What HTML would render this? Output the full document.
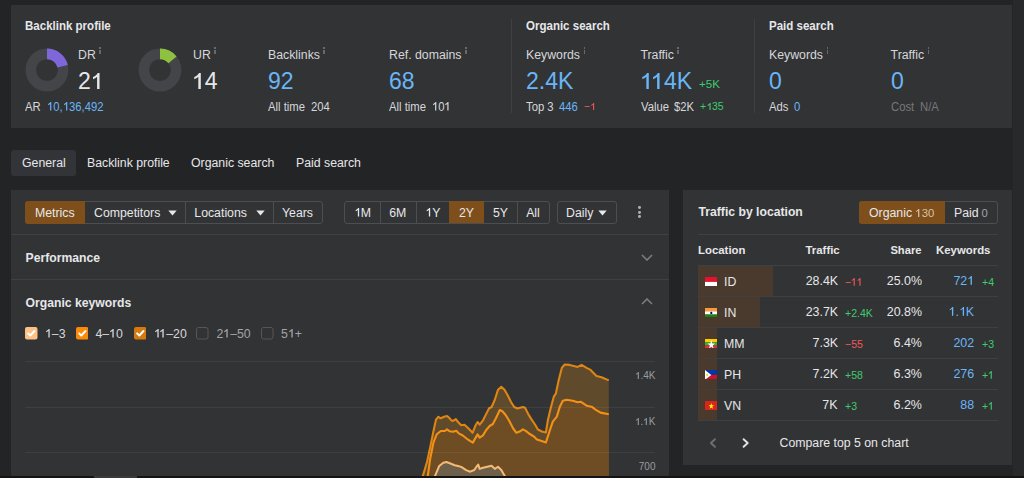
<!DOCTYPE html>
<html><head><meta charset="utf-8"><style>
html,body{margin:0;padding:0;}
body{width:1024px;height:478px;overflow:hidden;background:#232426;position:relative;font-family:"Liberation Sans", sans-serif;}
.t{position:absolute;white-space:nowrap;}
.r{position:absolute;}
.one{display:inline-block;width:0.5562em;height:0.6985em;vertical-align:baseline;fill:currentColor;}
.one.k{margin-right:-0.0742em;}
</style></head><body>
<div class="r" style="left:11px;top:5px;width:1001px;height:123px;background:#323335;"></div>
<div class="t" style="left:25px;transform:scaleX(0.945);transform-origin:0 0;top:19.57px;font-size:12.2px;line-height:12.2px;font-weight:700;color:#e6e7e9;">Backlink profile</div>
<div class="t" style="left:526px;transform:scaleX(0.945);transform-origin:0 0;top:19.57px;font-size:12.2px;line-height:12.2px;font-weight:700;color:#e6e7e9;">Organic search</div>
<div class="t" style="left:769px;transform:scaleX(0.945);transform-origin:0 0;top:19.57px;font-size:12.2px;line-height:12.2px;font-weight:700;color:#e6e7e9;">Paid search</div>
<div class="r" style="left:511px;top:19px;width:1px;height:94px;background:#3f4042;"></div>
<div class="r" style="left:754px;top:19px;width:1px;height:94px;background:#3f4042;"></div>
<svg class="r" style="left:21.5px;top:45px" width="50" height="50" viewBox="0 0 50 50"><circle cx="25" cy="25" r="16.1" fill="none" stroke="#444548" stroke-width="10.6"/><circle cx="25" cy="25" r="16.1" fill="none" stroke="#7f67da" stroke-width="10.6" stroke-dasharray="21.24 101.16" transform="rotate(-90 25 25)"/></svg>
<svg class="r" style="left:135.4px;top:44.8px" width="50" height="50" viewBox="0 0 50 50"><circle cx="25" cy="25" r="16.1" fill="none" stroke="#444548" stroke-width="10.6"/><circle cx="25" cy="25" r="16.1" fill="none" stroke="#8dc13f" stroke-width="10.6" stroke-dasharray="14.16 101.16" transform="rotate(-90 25 25)"/></svg>
<div class="t" style="left:78px;top:49.49px;font-size:12.3px;line-height:12.3px;font-weight:400;color:#d6d7da;">DR</div>
<div class="r" style="left:99.26581250000001px;top:47px;width:1.6px;height:1.6px;background:#68696c;"></div>
<div class="r" style="left:99.26581250000001px;top:49.5px;width:1.6px;height:4.7px;background:#68696c;"></div>
<div class="t" style="left:193px;top:49.49px;font-size:12.3px;line-height:12.3px;font-weight:400;color:#d6d7da;">UR</div>
<div class="r" style="left:214.2658125px;top:47px;width:1.6px;height:1.6px;background:#68696c;"></div>
<div class="r" style="left:214.2658125px;top:49.5px;width:1.6px;height:4.7px;background:#68696c;"></div>
<div class="t" style="left:268px;top:49.49px;font-size:12.3px;line-height:12.3px;font-weight:400;color:#d6d7da;">Backlinks</div>
<div class="r" style="left:323.452125px;top:47px;width:1.6px;height:1.6px;background:#68696c;"></div>
<div class="r" style="left:323.452125px;top:49.5px;width:1.6px;height:4.7px;background:#68696c;"></div>
<div class="t" style="left:389px;top:49.49px;font-size:12.3px;line-height:12.3px;font-weight:400;color:#d6d7da;">Ref. domains</div>
<div class="r" style="left:464.97390625px;top:47px;width:1.6px;height:1.6px;background:#68696c;"></div>
<div class="r" style="left:464.97390625px;top:49.5px;width:1.6px;height:4.7px;background:#68696c;"></div>
<div class="t" style="left:526px;top:49.49px;font-size:12.3px;line-height:12.3px;font-weight:400;color:#d6d7da;">Keywords</div>
<div class="r" style="left:583.50853125px;top:47px;width:1.6px;height:1.6px;background:#68696c;"></div>
<div class="r" style="left:583.50853125px;top:49.5px;width:1.6px;height:4.7px;background:#68696c;"></div>
<div class="t" style="left:640.4px;top:49.49px;font-size:12.3px;line-height:12.3px;font-weight:400;color:#d6d7da;">Traffic</div>
<div class="r" style="left:677.39059375px;top:47px;width:1.6px;height:1.6px;background:#68696c;"></div>
<div class="r" style="left:677.39059375px;top:49.5px;width:1.6px;height:4.7px;background:#68696c;"></div>
<div class="t" style="left:769px;top:49.49px;font-size:12.3px;line-height:12.3px;font-weight:400;color:#d6d7da;">Keywords</div>
<div class="r" style="left:826.50853125px;top:47px;width:1.6px;height:1.6px;background:#68696c;"></div>
<div class="r" style="left:826.50853125px;top:49.5px;width:1.6px;height:4.7px;background:#68696c;"></div>
<div class="t" style="left:890.6px;top:49.49px;font-size:12.3px;line-height:12.3px;font-weight:400;color:#d6d7da;">Traffic</div>
<div class="r" style="left:927.59059375px;top:47px;width:1.6px;height:1.6px;background:#68696c;"></div>
<div class="r" style="left:927.59059375px;top:49.5px;width:1.6px;height:4.7px;background:#68696c;"></div>
<div class="t" style="left:78px;transform:scaleX(0.98);transform-origin:0 0;top:69.91px;font-size:23.5px;line-height:23.5px;font-weight:400;color:#e6e7e9;">2<svg class="one" viewBox="0 0 1139 1466" preserveAspectRatio="none"><path d="M783 1466L563 1466L563 339C520 380 463 421 392 463C322 504 259 536 203 557L203 363C303 316 391 259 467 192C543 125 597 61 628 0L783 0Z"/></svg></div>
<div class="t" style="left:192.3px;transform:scaleX(0.98);transform-origin:0 0;top:69.91px;font-size:23.5px;line-height:23.5px;font-weight:400;color:#e6e7e9;"><svg class="one" viewBox="0 0 1139 1466" preserveAspectRatio="none"><path d="M783 1466L563 1466L563 339C520 380 463 421 392 463C322 504 259 536 203 557L203 363C303 316 391 259 467 192C543 125 597 61 628 0L783 0Z"/></svg>4</div>
<div class="t" style="left:268px;transform:scaleX(0.98);transform-origin:0 0;top:69.91px;font-size:23.5px;line-height:23.5px;font-weight:400;color:#69b5f5;">92</div>
<div class="t" style="left:389px;transform:scaleX(0.98);transform-origin:0 0;top:69.91px;font-size:23.5px;line-height:23.5px;font-weight:400;color:#69b5f5;">68</div>
<div class="t" style="left:526px;transform:scaleX(0.98);transform-origin:0 0;top:69.91px;font-size:23.5px;line-height:23.5px;font-weight:400;color:#69b5f5;">2.4K</div>
<div class="t" style="left:639.6px;transform:scaleX(0.98);transform-origin:0 0;top:69.91px;font-size:23.5px;line-height:23.5px;font-weight:400;color:#69b5f5;"><svg class="one k" viewBox="0 0 1139 1466" preserveAspectRatio="none"><path d="M783 1466L563 1466L563 339C520 380 463 421 392 463C322 504 259 536 203 557L203 363C303 316 391 259 467 192C543 125 597 61 628 0L783 0Z"/></svg><svg class="one" viewBox="0 0 1139 1466" preserveAspectRatio="none"><path d="M783 1466L563 1466L563 339C520 380 463 421 392 463C322 504 259 536 203 557L203 363C303 316 391 259 467 192C543 125 597 61 628 0L783 0Z"/></svg>4K</div>
<div class="t" style="left:769px;transform:scaleX(0.98);transform-origin:0 0;top:69.91px;font-size:23.5px;line-height:23.5px;font-weight:400;color:#69b5f5;">0</div>
<div class="t" style="left:891px;transform:scaleX(0.98);transform-origin:0 0;top:69.91px;font-size:23.5px;line-height:23.5px;font-weight:400;color:#69b5f5;">0</div>
<div class="t" style="left:699px;top:77.98px;font-size:11.6px;line-height:11.6px;font-weight:400;color:#3fcb6f;">+5K</div>
<div class="t" style="left:25px;transform:scaleX(0.94);transform-origin:0 0;top:100.64px;font-size:12px;line-height:12px;font-weight:400;color:#d6d7da;">AR</div>
<div class="t" style="left:46.5px;transform:scaleX(0.94);transform-origin:0 0;top:100.64px;font-size:12px;line-height:12px;font-weight:400;color:#69b5f5;"><svg class="one" viewBox="0 0 1139 1466" preserveAspectRatio="none"><path d="M783 1466L563 1466L563 339C520 380 463 421 392 463C322 504 259 536 203 557L203 363C303 316 391 259 467 192C543 125 597 61 628 0L783 0Z"/></svg>0,<svg class="one" viewBox="0 0 1139 1466" preserveAspectRatio="none"><path d="M783 1466L563 1466L563 339C520 380 463 421 392 463C322 504 259 536 203 557L203 363C303 316 391 259 467 192C543 125 597 61 628 0L783 0Z"/></svg>36,492</div>
<div class="t" style="left:268px;transform:scaleX(0.94);transform-origin:0 0;top:100.64px;font-size:12px;line-height:12px;font-weight:400;color:#d6d7da;">All time</div>
<div class="t" style="left:311px;transform:scaleX(0.94);transform-origin:0 0;top:100.64px;font-size:12px;line-height:12px;font-weight:400;color:#d6d7da;">204</div>
<div class="t" style="left:389px;transform:scaleX(0.94);transform-origin:0 0;top:100.64px;font-size:12px;line-height:12px;font-weight:400;color:#d6d7da;">All time</div>
<div class="t" style="left:432px;transform:scaleX(0.94);transform-origin:0 0;top:100.64px;font-size:12px;line-height:12px;font-weight:400;color:#d6d7da;"><svg class="one" viewBox="0 0 1139 1466" preserveAspectRatio="none"><path d="M783 1466L563 1466L563 339C520 380 463 421 392 463C322 504 259 536 203 557L203 363C303 316 391 259 467 192C543 125 597 61 628 0L783 0Z"/></svg>0<svg class="one" viewBox="0 0 1139 1466" preserveAspectRatio="none"><path d="M783 1466L563 1466L563 339C520 380 463 421 392 463C322 504 259 536 203 557L203 363C303 316 391 259 467 192C543 125 597 61 628 0L783 0Z"/></svg></div>
<div class="t" style="left:526px;transform:scaleX(0.94);transform-origin:0 0;top:100.64px;font-size:12px;line-height:12px;font-weight:400;color:#d6d7da;">Top 3</div>
<div class="t" style="left:559px;transform:scaleX(0.94);transform-origin:0 0;top:100.64px;font-size:12px;line-height:12px;font-weight:400;color:#69b5f5;">446</div>
<div class="t" style="left:584.3px;transform:scaleX(0.9);transform-origin:0 0;top:101.32px;font-size:11.2px;line-height:11.2px;font-weight:400;color:#f0585a;">&minus;<svg class="one" viewBox="0 0 1139 1466" preserveAspectRatio="none"><path d="M783 1466L563 1466L563 339C520 380 463 421 392 463C322 504 259 536 203 557L203 363C303 316 391 259 467 192C543 125 597 61 628 0L783 0Z"/></svg></div>
<div class="t" style="left:641px;transform:scaleX(0.94);transform-origin:0 0;top:100.64px;font-size:12px;line-height:12px;font-weight:400;color:#d6d7da;">Value</div>
<div class="t" style="left:673.8px;transform:scaleX(0.94);transform-origin:0 0;top:100.64px;font-size:12px;line-height:12px;font-weight:400;color:#d6d7da;">$2K</div>
<div class="t" style="left:699.5px;transform:scaleX(0.94);transform-origin:0 0;top:101.32px;font-size:11.2px;line-height:11.2px;font-weight:400;color:#3fcb6f;">+<svg class="one" viewBox="0 0 1139 1466" preserveAspectRatio="none"><path d="M783 1466L563 1466L563 339C520 380 463 421 392 463C322 504 259 536 203 557L203 363C303 316 391 259 467 192C543 125 597 61 628 0L783 0Z"/></svg>35</div>
<div class="t" style="left:769px;transform:scaleX(0.94);transform-origin:0 0;top:100.64px;font-size:12px;line-height:12px;font-weight:400;color:#d6d7da;">Ads</div>
<div class="t" style="left:794px;transform:scaleX(0.94);transform-origin:0 0;top:100.64px;font-size:12px;line-height:12px;font-weight:400;color:#69b5f5;">0</div>
<div class="t" style="left:891px;transform:scaleX(0.94);transform-origin:0 0;top:100.64px;font-size:12px;line-height:12px;font-weight:400;color:#77787b;">Cost</div>
<div class="t" style="left:919.5px;transform:scaleX(0.94);transform-origin:0 0;top:100.64px;font-size:12px;line-height:12px;font-weight:400;color:#77787b;">N/A</div>
<div class="r" style="left:11px;top:149.7px;width:65px;height:26.2px;background:#333437;border-radius:3px;"></div>
<div class="t" style="left:22px;top:156.89px;font-size:12.3px;line-height:12.3px;font-weight:400;color:#e6e7e9;">General</div>
<div class="t" style="left:87px;top:156.89px;font-size:12.3px;line-height:12.3px;font-weight:400;color:#e6e7e9;">Backlink profile</div>
<div class="t" style="left:191px;top:156.89px;font-size:12.3px;line-height:12.3px;font-weight:400;color:#e6e7e9;">Organic search</div>
<div class="t" style="left:296px;top:156.89px;font-size:12.3px;line-height:12.3px;font-weight:400;color:#e6e7e9;">Paid search</div>
<div class="r" style="left:11px;top:190px;width:658px;height:300px;background:#323335;"></div>
<div class="r" style="left:25px;top:200.5px;width:298px;height:23px;background:transparent;border:1px solid #4d4e51;border-radius:3px;box-sizing:border-box;"></div>
<div class="r" style="left:25px;top:200.5px;width:60px;height:23px;background:#7e4f1a;border-radius:3px 0 0 3px;"></div>
<div class="r" style="left:184.8px;top:201px;width:1px;height:22px;background:#4d4e51;"></div>
<div class="r" style="left:273px;top:201px;width:1px;height:22px;background:#4d4e51;"></div>
<div class="t" style="left:35px;top:206.89px;font-size:12.3px;line-height:12.3px;font-weight:400;color:#e6e7e9;">Metrics</div>
<div class="t" style="left:94px;top:206.89px;font-size:12.3px;line-height:12.3px;font-weight:400;color:#e6e7e9;">Competitors</div>
<div class="t" style="left:194.3px;top:206.89px;font-size:12.3px;line-height:12.3px;font-weight:400;color:#e6e7e9;">Locations</div>
<div class="t" style="left:282px;top:206.89px;font-size:12.3px;line-height:12.3px;font-weight:400;color:#e6e7e9;">Years</div>
<svg class="r" style="left:168.3px;top:209.8px" width="9" height="6" viewBox="0 0 9 6"><path d="M0.3 0.5 L8.7 0.5 L4.5 5.6 Z" fill="#e6e7e9"/></svg>
<svg class="r" style="left:255.5px;top:209.8px" width="9" height="6" viewBox="0 0 9 6"><path d="M0.3 0.5 L8.7 0.5 L4.5 5.6 Z" fill="#e6e7e9"/></svg>
<div class="r" style="left:344px;top:200.5px;width:206px;height:23px;background:transparent;border:1px solid #4d4e51;border-radius:3px;box-sizing:border-box;"></div>
<div class="r" style="left:449px;top:201px;width:35px;height:22px;background:#7e4f1a;"></div>
<div class="r" style="left:380px;top:201px;width:1px;height:22px;background:#4d4e51;"></div>
<div class="r" style="left:416px;top:201px;width:1px;height:22px;background:#4d4e51;"></div>
<div class="r" style="left:516.5px;top:201px;width:1px;height:22px;background:#4d4e51;"></div>
<div class="t" style="left:362.5px;transform:translateX(-50%);top:206.89px;font-size:12.3px;line-height:12.3px;font-weight:400;color:#e6e7e9;"><svg class="one" viewBox="0 0 1139 1466" preserveAspectRatio="none"><path d="M783 1466L563 1466L563 339C520 380 463 421 392 463C322 504 259 536 203 557L203 363C303 316 391 259 467 192C543 125 597 61 628 0L783 0Z"/></svg>M</div>
<div class="t" style="left:397.8px;transform:translateX(-50%);top:206.89px;font-size:12.3px;line-height:12.3px;font-weight:400;color:#e6e7e9;">6M</div>
<div class="t" style="left:433px;transform:translateX(-50%);top:206.89px;font-size:12.3px;line-height:12.3px;font-weight:400;color:#e6e7e9;"><svg class="one" viewBox="0 0 1139 1466" preserveAspectRatio="none"><path d="M783 1466L563 1466L563 339C520 380 463 421 392 463C322 504 259 536 203 557L203 363C303 316 391 259 467 192C543 125 597 61 628 0L783 0Z"/></svg>Y</div>
<div class="t" style="left:466.5px;transform:translateX(-50%);top:206.89px;font-size:12.3px;line-height:12.3px;font-weight:400;color:#e6e7e9;">2Y</div>
<div class="t" style="left:500.5px;transform:translateX(-50%);top:206.89px;font-size:12.3px;line-height:12.3px;font-weight:400;color:#e6e7e9;">5Y</div>
<div class="t" style="left:533px;transform:translateX(-50%);top:206.89px;font-size:12.3px;line-height:12.3px;font-weight:400;color:#e6e7e9;">All</div>
<div class="r" style="left:557px;top:200.5px;width:59.5px;height:23px;background:transparent;border:1px solid #4d4e51;border-radius:3px;box-sizing:border-box;"></div>
<div class="t" style="left:566px;top:206.89px;font-size:12.3px;line-height:12.3px;font-weight:400;color:#e6e7e9;">Daily</div>
<svg class="r" style="left:598.3px;top:209.8px" width="9" height="6" viewBox="0 0 9 6"><path d="M0.3 0.5 L8.7 0.5 L4.5 5.6 Z" fill="#e6e7e9"/></svg>
<div class="r" style="left:637.85px;top:206.29999999999998px;width:2.8px;height:2.8px;background:#aeafb2;border-radius:50%;"></div>
<div class="r" style="left:637.85px;top:210.79999999999998px;width:2.8px;height:2.8px;background:#aeafb2;border-radius:50%;"></div>
<div class="r" style="left:637.85px;top:215.29999999999998px;width:2.8px;height:2.8px;background:#aeafb2;border-radius:50%;"></div>
<div class="r" style="left:11px;top:234px;width:658px;height:1px;background:#3f4042;"></div>
<div class="t" style="left:25.5px;top:251.67px;font-size:12.2px;line-height:12.2px;font-weight:700;color:#e6e7e9;">Performance</div>
<div class="r" style="left:11px;top:279px;width:658px;height:1px;background:#3f4042;"></div>
<div class="t" style="left:25.5px;top:296.87px;font-size:12.2px;line-height:12.2px;font-weight:700;color:#e6e7e9;">Organic keywords</div>
<svg class="r" style="left:640.8px;top:254.3px" width="12" height="7" viewBox="0 0 12 7"><path d="M1 1 L6 6 L11 1" fill="none" stroke="#7b7c80" stroke-width="1.6"/></svg>
<svg class="r" style="left:640.8px;top:298.3px" width="12" height="7" viewBox="0 0 12 7"><path d="M1 6 L6 1 L11 6" fill="none" stroke="#7b7c80" stroke-width="1.6"/></svg>
<svg class="r" style="left:25.2px;top:327px" width="12.5" height="12.5" viewBox="0 0 12.5 12.5"><rect x="0" y="0" width="12.5" height="12.5" rx="2" fill="#fdc185"/><path d="M3.1 6.3 L5.3 8.5 L9.5 4" fill="none" stroke="#fff" stroke-width="1.9" stroke-linecap="round" stroke-linejoin="round"/></svg>
<svg class="r" style="left:75.6px;top:327px" width="12.5" height="12.5" viewBox="0 0 12.5 12.5"><rect x="0" y="0" width="12.5" height="12.5" rx="2" fill="#fc8a0a"/><path d="M3.1 6.3 L5.3 8.5 L9.5 4" fill="none" stroke="#fff" stroke-width="1.9" stroke-linecap="round" stroke-linejoin="round"/></svg>
<svg class="r" style="left:133.6px;top:327px" width="12.5" height="12.5" viewBox="0 0 12.5 12.5"><rect x="0" y="0" width="12.5" height="12.5" rx="2" fill="#d6790f"/><path d="M3.1 6.3 L5.3 8.5 L9.5 4" fill="none" stroke="#fff" stroke-width="1.9" stroke-linecap="round" stroke-linejoin="round"/></svg>
<svg class="r" style="left:196.3px;top:327px" width="12.5" height="12.5" viewBox="0 0 12.5 12.5"><rect x="0.5" y="0.5" width="11.5" height="11.5" rx="2" fill="none" stroke="#56575b" stroke-width="1"/></svg>
<svg class="r" style="left:261px;top:327px" width="12.5" height="12.5" viewBox="0 0 12.5 12.5"><rect x="0.5" y="0.5" width="11.5" height="11.5" rx="2" fill="none" stroke="#56575b" stroke-width="1"/></svg>
<div class="t" style="left:45px;top:327.79px;font-size:12.3px;line-height:12.3px;font-weight:400;color:#d6d7da;"><svg class="one" viewBox="0 0 1139 1466" preserveAspectRatio="none"><path d="M783 1466L563 1466L563 339C520 380 463 421 392 463C322 504 259 536 203 557L203 363C303 316 391 259 467 192C543 125 597 61 628 0L783 0Z"/></svg>&ndash;3</div>
<div class="t" style="left:95.5px;top:327.79px;font-size:12.3px;line-height:12.3px;font-weight:400;color:#d6d7da;">4&ndash;<svg class="one" viewBox="0 0 1139 1466" preserveAspectRatio="none"><path d="M783 1466L563 1466L563 339C520 380 463 421 392 463C322 504 259 536 203 557L203 363C303 316 391 259 467 192C543 125 597 61 628 0L783 0Z"/></svg>0</div>
<div class="t" style="left:153.5px;top:327.79px;font-size:12.3px;line-height:12.3px;font-weight:400;color:#d6d7da;"><svg class="one k" viewBox="0 0 1139 1466" preserveAspectRatio="none"><path d="M783 1466L563 1466L563 339C520 380 463 421 392 463C322 504 259 536 203 557L203 363C303 316 391 259 467 192C543 125 597 61 628 0L783 0Z"/></svg><svg class="one" viewBox="0 0 1139 1466" preserveAspectRatio="none"><path d="M783 1466L563 1466L563 339C520 380 463 421 392 463C322 504 259 536 203 557L203 363C303 316 391 259 467 192C543 125 597 61 628 0L783 0Z"/></svg>&ndash;20</div>
<div class="t" style="left:216.5px;top:327.79px;font-size:12.3px;line-height:12.3px;font-weight:400;color:#a3a4a8;">2<svg class="one" viewBox="0 0 1139 1466" preserveAspectRatio="none"><path d="M783 1466L563 1466L563 339C520 380 463 421 392 463C322 504 259 536 203 557L203 363C303 316 391 259 467 192C543 125 597 61 628 0L783 0Z"/></svg>&ndash;50</div>
<div class="t" style="left:281px;top:327.79px;font-size:12.3px;line-height:12.3px;font-weight:400;color:#a3a4a8;">5<svg class="one" viewBox="0 0 1139 1466" preserveAspectRatio="none"><path d="M783 1466L563 1466L563 339C520 380 463 421 392 463C322 504 259 536 203 557L203 363C303 316 391 259 467 192C543 125 597 61 628 0L783 0Z"/></svg>+</div>
<div class="t" style="right:368.5px;top:371.04px;font-size:10px;line-height:10px;font-weight:400;color:#9a9ca0;"><svg class="one" viewBox="0 0 1139 1466" preserveAspectRatio="none"><path d="M783 1466L563 1466L563 339C520 380 463 421 392 463C322 504 259 536 203 557L203 363C303 316 391 259 467 192C543 125 597 61 628 0L783 0Z"/></svg>.4K</div>
<div class="t" style="right:368.5px;top:416.84px;font-size:10px;line-height:10px;font-weight:400;color:#9a9ca0;"><svg class="one" viewBox="0 0 1139 1466" preserveAspectRatio="none"><path d="M783 1466L563 1466L563 339C520 380 463 421 392 463C322 504 259 536 203 557L203 363C303 316 391 259 467 192C543 125 597 61 628 0L783 0Z"/></svg>.<svg class="one" viewBox="0 0 1139 1466" preserveAspectRatio="none"><path d="M783 1466L563 1466L563 339C520 380 463 421 392 463C322 504 259 536 203 557L203 363C303 316 391 259 467 192C543 125 597 61 628 0L783 0Z"/></svg>K</div>
<div class="t" style="right:368.5px;top:461.84px;font-size:10px;line-height:10px;font-weight:400;color:#9a9ca0;">700</div>
<svg class="r" style="left:0;top:0" width="1024" height="478" viewBox="0 0 1024 478"><defs><clipPath id="cc"><rect x="11" y="190" width="658" height="286"/></clipPath></defs><g clip-path="url(#cc)"><polygon points="421.5,478.0 422.9,475.8 427.0,462.0 430.2,447.3 433.5,431.0 436.0,419.6 438.4,416.8 440.8,418.3 444.1,416.8 447.0,416.0 449.0,417.6 451.4,420.4 453.0,420.9 455.8,419.2 458.0,422.0 461.2,425.3 464.5,424.8 468.5,428.5 472.6,432.8 475.4,425.7 477.6,422.0 479.7,424.6 483.0,420.3 486.2,413.9 489.0,408.5 491.6,407.0 494.8,399.8 498.0,389.7 501.3,386.9 504.5,389.7 507.8,395.5 511.0,402.0 514.2,407.0 517.5,408.5 522.9,407.0 525.0,407.7 528.0,413.6 531.0,418.6 535.0,424.5 537.9,429.5 541.9,431.5 545.9,432.5 547.8,420.6 550.8,407.7 553.8,396.7 555.8,393.7 558.8,379.8 561.8,367.9 564.7,364.5 569.7,364.9 577.7,366.9 581.6,364.9 586.6,367.9 590.6,369.9 593.5,372.9 596.5,375.9 601.5,377.3 608.8,380.4 608.8,478.0 421.5,478.0" fill="#5f4a2b"/><polygon points="426.5,478.0 427.8,475.8 430.2,458.7 433.5,442.4 436.8,434.2 440.8,431.0 444.9,431.0 447.0,429.3 449.8,431.3 453.0,431.8 456.3,430.7 458.8,433.4 462.8,435.5 466.9,438.8 472.8,442.6 477.6,434.4 479.7,437.6 483.0,435.4 486.2,430.0 489.9,425.7 492.7,424.2 495.9,418.2 499.8,410.0 502.4,411.3 505.6,415.0 508.9,420.3 513.2,428.5 516.4,432.8 519.6,431.6 522.9,429.4 526.1,431.1 529.0,433.5 533.9,436.5 536.9,439.4 540.9,440.8 545.9,442.4 548.8,433.5 552.8,421.6 556.8,416.6 559.8,406.7 562.8,400.7 566.7,399.7 572.7,400.7 577.7,402.3 580.6,401.7 586.6,405.7 591.6,406.7 595.5,409.6 600.5,412.6 608.8,414.2 608.8,478.0 426.5,478.0" fill="#6f4d24"/><polygon points="434.0,478.0 435.1,475.8 439.2,466.0 443.3,462.8 446.5,462.0 449.8,463.3 454.7,465.2 458.0,466.0 461.2,466.9 466.1,470.1 470.2,471.7 474.3,470.0 476.5,466.7 478.2,464.6 479.7,468.9 483.0,467.8 487.3,466.7 491.6,465.7 494.8,468.9 498.0,466.7 501.3,470.0 504.5,475.4 506.0,478.0 506.0,478.0 434.0,478.0" fill="#6e5f4b"/><polyline points="421.5,478.0 422.9,475.8 427.0,462.0 430.2,447.3 433.5,431.0 436.0,419.6 438.4,416.8 440.8,418.3 444.1,416.8 447.0,416.0 449.0,417.6 451.4,420.4 453.0,420.9 455.8,419.2 458.0,422.0 461.2,425.3 464.5,424.8 468.5,428.5 472.6,432.8 475.4,425.7 477.6,422.0 479.7,424.6 483.0,420.3 486.2,413.9 489.0,408.5 491.6,407.0 494.8,399.8 498.0,389.7 501.3,386.9 504.5,389.7 507.8,395.5 511.0,402.0 514.2,407.0 517.5,408.5 522.9,407.0 525.0,407.7 528.0,413.6 531.0,418.6 535.0,424.5 537.9,429.5 541.9,431.5 545.9,432.5 547.8,420.6 550.8,407.7 553.8,396.7 555.8,393.7 558.8,379.8 561.8,367.9 564.7,364.5 569.7,364.9 577.7,366.9 581.6,364.9 586.6,367.9 590.6,369.9 593.5,372.9 596.5,375.9 601.5,377.3 608.8,380.4" fill="none" stroke="#de8514" stroke-width="2.1" stroke-linejoin="round"/><polyline points="426.5,478.0 427.8,475.8 430.2,458.7 433.5,442.4 436.8,434.2 440.8,431.0 444.9,431.0 447.0,429.3 449.8,431.3 453.0,431.8 456.3,430.7 458.8,433.4 462.8,435.5 466.9,438.8 472.8,442.6 477.6,434.4 479.7,437.6 483.0,435.4 486.2,430.0 489.9,425.7 492.7,424.2 495.9,418.2 499.8,410.0 502.4,411.3 505.6,415.0 508.9,420.3 513.2,428.5 516.4,432.8 519.6,431.6 522.9,429.4 526.1,431.1 529.0,433.5 533.9,436.5 536.9,439.4 540.9,440.8 545.9,442.4 548.8,433.5 552.8,421.6 556.8,416.6 559.8,406.7 562.8,400.7 566.7,399.7 572.7,400.7 577.7,402.3 580.6,401.7 586.6,405.7 591.6,406.7 595.5,409.6 600.5,412.6 608.8,414.2" fill="none" stroke="#f39016" stroke-width="2.1" stroke-linejoin="round"/><polyline points="434.0,478.0 435.1,475.8 439.2,466.0 443.3,462.8 446.5,462.0 449.8,463.3 454.7,465.2 458.0,466.0 461.2,466.9 466.1,470.1 470.2,471.7 474.3,470.0 476.5,466.7 478.2,464.6 479.7,468.9 483.0,467.8 487.3,466.7 491.6,465.7 494.8,468.9 498.0,466.7 501.3,470.0 504.5,475.4 506.0,478.0" fill="none" stroke="#f5bb74" stroke-width="2" stroke-linejoin="round"/></g><rect x="25" y="361" width="630" height="1" fill="rgba(255,255,255,0.06)"/><rect x="25" y="407" width="630" height="1" fill="rgba(255,255,255,0.06)"/><rect x="25" y="452" width="630" height="1" fill="rgba(255,255,255,0.06)"/></svg>
<div class="r" style="left:683px;top:190px;width:329px;height:275px;background:#323335;"></div>
<div class="t" style="left:698.5px;top:206.47px;font-size:12.2px;line-height:12.2px;font-weight:700;color:#e6e7e9;">Traffic by location</div>
<div class="r" style="left:859px;top:200.5px;width:139px;height:23px;background:transparent;border:1px solid #4d4e51;border-radius:3px;box-sizing:border-box;"></div>
<div class="r" style="left:859px;top:200.5px;width:86px;height:23px;background:#7e4f1a;border-radius:3px 0 0 3px;"></div>
<div class="t" style="left:869px;top:206.69px;font-size:12.3px;line-height:12.3px;font-weight:400;color:#e6e7e9;">Organic</div>
<div class="t" style="right:89.70000000000005px;top:207.53px;font-size:11.3px;line-height:11.3px;font-weight:400;color:#d6c2a8;"><svg class="one" viewBox="0 0 1139 1466" preserveAspectRatio="none"><path d="M783 1466L563 1466L563 339C520 380 463 421 392 463C322 504 259 536 203 557L203 363C303 316 391 259 467 192C543 125 597 61 628 0L783 0Z"/></svg>30</div>
<div class="t" style="left:954px;top:206.69px;font-size:12.3px;line-height:12.3px;font-weight:400;color:#e6e7e9;">Paid</div>
<div class="t" style="right:36.200000000000045px;top:207.53px;font-size:11.3px;line-height:11.3px;font-weight:400;color:#9ca5ae;">0</div>
<div class="r" style="left:698px;top:234px;width:300px;height:1px;background:#3f4042;"></div>
<div class="t" style="left:698px;top:244.55px;font-size:11.4px;line-height:11.4px;font-weight:700;color:#e6e7e9;">Location</div>
<div class="t" style="left:805.5px;top:244.55px;font-size:11.4px;line-height:11.4px;font-weight:700;color:#e6e7e9;">Traffic</div>
<div class="t" style="right:102.5px;top:244.72px;font-size:11.2px;line-height:11.2px;font-weight:700;color:#e6e7e9;">Share</div>
<div class="t" style="left:936px;top:244.55px;font-size:11.4px;line-height:11.4px;font-weight:700;color:#e6e7e9;">Keywords</div>
<div class="r" style="left:698px;top:265px;width:300px;height:1px;background:#3f4042;"></div>
<div class="r" style="left:698px;top:265.5px;width:74.60000000000002px;height:30.5px;background:#4a3a2e;"></div>
<div class="r" style="left:698px;top:296.0px;width:300px;height:1px;background:#3f4042;"></div>
<svg class="r" style="left:704.6px;top:276.5px" width="12.6" height="9.8" viewBox="0 0 13 9" preserveAspectRatio="none"><rect width="13" height="4.5" fill="#e8112d"/><rect y="4.5" width="13" height="4.5" fill="#fff"/></svg>
<div class="t" style="left:724px;top:275.69px;font-size:12.3px;line-height:12.3px;font-weight:400;color:#e6e7e9;">ID</div>
<div class="t" style="right:186.20000000000005px;transform:scaleX(0.98);transform-origin:100% 0;top:275.35px;font-size:12.7px;line-height:12.7px;font-weight:400;color:#e6e7e9;">28.4K</div>
<div class="t" style="left:844.5px;transform:scaleX(0.96);transform-origin:0 0;top:276.79px;font-size:11px;line-height:11px;font-weight:400;color:#f0585a;">&minus;<svg class="one k" viewBox="0 0 1139 1466" preserveAspectRatio="none"><path d="M783 1466L563 1466L563 339C520 380 463 421 392 463C322 504 259 536 203 557L203 363C303 316 391 259 467 192C543 125 597 61 628 0L783 0Z"/></svg><svg class="one" viewBox="0 0 1139 1466" preserveAspectRatio="none"><path d="M783 1466L563 1466L563 339C520 380 463 421 392 463C322 504 259 536 203 557L203 363C303 316 391 259 467 192C543 125 597 61 628 0L783 0Z"/></svg></div>
<div class="t" style="right:102.5px;transform:scaleX(0.98);transform-origin:100% 0;top:275.35px;font-size:12.7px;line-height:12.7px;font-weight:400;color:#e6e7e9;">25.0%</div>
<div class="t" style="right:49.5px;transform:scaleX(0.98);transform-origin:100% 0;top:275.35px;font-size:12.7px;line-height:12.7px;font-weight:400;color:#69b5f5;">72<svg class="one" viewBox="0 0 1139 1466" preserveAspectRatio="none"><path d="M783 1466L563 1466L563 339C520 380 463 421 392 463C322 504 259 536 203 557L203 363C303 316 391 259 467 192C543 125 597 61 628 0L783 0Z"/></svg></div>
<div class="t" style="left:982px;transform:scaleX(0.96);transform-origin:0 0;top:276.79px;font-size:11px;line-height:11px;font-weight:400;color:#3fcb6f;">+4</div>
<div class="r" style="left:698px;top:296.5px;width:62px;height:30.5px;background:#4a3a2e;"></div>
<div class="r" style="left:698px;top:327.0px;width:300px;height:1px;background:#3f4042;"></div>
<svg class="r" style="left:704.6px;top:307.5px" width="12.6" height="9.8" viewBox="0 0 13 9" preserveAspectRatio="none"><rect width="13" height="3" fill="#ff9933"/><rect y="3" width="13" height="3" fill="#fff"/><rect y="6" width="13" height="3" fill="#138808"/><circle cx="6.5" cy="4.5" r="1.1" fill="#000080"/></svg>
<div class="t" style="left:724px;top:306.69px;font-size:12.3px;line-height:12.3px;font-weight:400;color:#e6e7e9;">IN</div>
<div class="t" style="right:186.20000000000005px;transform:scaleX(0.98);transform-origin:100% 0;top:306.35px;font-size:12.7px;line-height:12.7px;font-weight:400;color:#e6e7e9;">23.7K</div>
<div class="t" style="left:844.5px;transform:scaleX(0.96);transform-origin:0 0;top:307.79px;font-size:11px;line-height:11px;font-weight:400;color:#3fcb6f;">+2.4K</div>
<div class="t" style="right:102.5px;transform:scaleX(0.98);transform-origin:100% 0;top:306.35px;font-size:12.7px;line-height:12.7px;font-weight:400;color:#e6e7e9;">20.8%</div>
<div class="t" style="right:49.5px;transform:scaleX(0.98);transform-origin:100% 0;top:306.35px;font-size:12.7px;line-height:12.7px;font-weight:400;color:#69b5f5;"><svg class="one" viewBox="0 0 1139 1466" preserveAspectRatio="none"><path d="M783 1466L563 1466L563 339C520 380 463 421 392 463C322 504 259 536 203 557L203 363C303 316 391 259 467 192C543 125 597 61 628 0L783 0Z"/></svg>.<svg class="one" viewBox="0 0 1139 1466" preserveAspectRatio="none"><path d="M783 1466L563 1466L563 339C520 380 463 421 392 463C322 504 259 536 203 557L203 363C303 316 391 259 467 192C543 125 597 61 628 0L783 0Z"/></svg>K</div>
<div class="r" style="left:698px;top:327.5px;width:19px;height:30.5px;background:#4a3a2e;"></div>
<div class="r" style="left:698px;top:358.0px;width:300px;height:1px;background:#3f4042;"></div>
<svg class="r" style="left:704.6px;top:338.5px" width="12.6" height="9.8" viewBox="0 0 13 9" preserveAspectRatio="none"><rect width="13" height="3" fill="#fecb00"/><rect y="3" width="13" height="3" fill="#34b233"/><rect y="6" width="13" height="3" fill="#ea2839"/><path d="M6.5 1.2 L7.5 4.2 L10.4 4.2 L8 6 L8.9 8.8 L6.5 7.1 L4.1 8.8 L5 6 L2.6 4.2 L5.5 4.2 Z" fill="#fff"/></svg>
<div class="t" style="left:724px;top:337.69px;font-size:12.3px;line-height:12.3px;font-weight:400;color:#e6e7e9;">MM</div>
<div class="t" style="right:186.20000000000005px;transform:scaleX(0.98);transform-origin:100% 0;top:337.35px;font-size:12.7px;line-height:12.7px;font-weight:400;color:#e6e7e9;">7.3K</div>
<div class="t" style="left:844.5px;transform:scaleX(0.96);transform-origin:0 0;top:338.79px;font-size:11px;line-height:11px;font-weight:400;color:#f0585a;">&minus;55</div>
<div class="t" style="right:102.5px;transform:scaleX(0.98);transform-origin:100% 0;top:337.35px;font-size:12.7px;line-height:12.7px;font-weight:400;color:#e6e7e9;">6.4%</div>
<div class="t" style="right:49.5px;transform:scaleX(0.98);transform-origin:100% 0;top:337.35px;font-size:12.7px;line-height:12.7px;font-weight:400;color:#69b5f5;">202</div>
<div class="t" style="left:982px;transform:scaleX(0.96);transform-origin:0 0;top:338.79px;font-size:11px;line-height:11px;font-weight:400;color:#3fcb6f;">+3</div>
<div class="r" style="left:698px;top:358.5px;width:19px;height:30.5px;background:#4a3a2e;"></div>
<div class="r" style="left:698px;top:389.0px;width:300px;height:1px;background:#3f4042;"></div>
<svg class="r" style="left:704.6px;top:369.5px" width="12.6" height="9.8" viewBox="0 0 13 9" preserveAspectRatio="none"><rect width="13" height="4.5" fill="#0038a8"/><rect y="4.5" width="13" height="4.5" fill="#ce1126"/><path d="M0 0 L6.5 4.5 L0 9 Z" fill="#fff"/><circle cx="2.2" cy="4.5" r="1" fill="#fcd116"/></svg>
<div class="t" style="left:724px;top:368.69px;font-size:12.3px;line-height:12.3px;font-weight:400;color:#e6e7e9;">PH</div>
<div class="t" style="right:186.20000000000005px;transform:scaleX(0.98);transform-origin:100% 0;top:368.35px;font-size:12.7px;line-height:12.7px;font-weight:400;color:#e6e7e9;">7.2K</div>
<div class="t" style="left:844.5px;transform:scaleX(0.96);transform-origin:0 0;top:369.79px;font-size:11px;line-height:11px;font-weight:400;color:#3fcb6f;">+58</div>
<div class="t" style="right:102.5px;transform:scaleX(0.98);transform-origin:100% 0;top:368.35px;font-size:12.7px;line-height:12.7px;font-weight:400;color:#e6e7e9;">6.3%</div>
<div class="t" style="right:49.5px;transform:scaleX(0.98);transform-origin:100% 0;top:368.35px;font-size:12.7px;line-height:12.7px;font-weight:400;color:#69b5f5;">276</div>
<div class="t" style="left:982px;transform:scaleX(0.96);transform-origin:0 0;top:369.79px;font-size:11px;line-height:11px;font-weight:400;color:#3fcb6f;">+<svg class="one" viewBox="0 0 1139 1466" preserveAspectRatio="none"><path d="M783 1466L563 1466L563 339C520 380 463 421 392 463C322 504 259 536 203 557L203 363C303 316 391 259 467 192C543 125 597 61 628 0L783 0Z"/></svg></div>
<div class="r" style="left:698px;top:389.5px;width:18.5px;height:30.5px;background:#4a3a2e;"></div>
<div class="r" style="left:698px;top:420.0px;width:300px;height:1px;background:#3f4042;"></div>
<svg class="r" style="left:704.6px;top:400.5px" width="12.6" height="9.8" viewBox="0 0 13 9" preserveAspectRatio="none"><rect width="13" height="9" fill="#da251d"/><path d="M6.5 1.8 L7.2 3.9 L9.3 3.9 L7.6 5.1 L8.2 7.2 L6.5 5.9 L4.8 7.2 L5.4 5.1 L3.7 3.9 L5.8 3.9 Z" fill="#ffff00"/></svg>
<div class="t" style="left:724px;top:399.69px;font-size:12.3px;line-height:12.3px;font-weight:400;color:#e6e7e9;">VN</div>
<div class="t" style="right:186.20000000000005px;transform:scaleX(0.98);transform-origin:100% 0;top:399.35px;font-size:12.7px;line-height:12.7px;font-weight:400;color:#e6e7e9;">7K</div>
<div class="t" style="left:844.5px;transform:scaleX(0.96);transform-origin:0 0;top:400.79px;font-size:11px;line-height:11px;font-weight:400;color:#3fcb6f;">+3</div>
<div class="t" style="right:102.5px;transform:scaleX(0.98);transform-origin:100% 0;top:399.35px;font-size:12.7px;line-height:12.7px;font-weight:400;color:#e6e7e9;">6.2%</div>
<div class="t" style="right:49.5px;transform:scaleX(0.98);transform-origin:100% 0;top:399.35px;font-size:12.7px;line-height:12.7px;font-weight:400;color:#69b5f5;">88</div>
<div class="t" style="left:982px;transform:scaleX(0.96);transform-origin:0 0;top:400.79px;font-size:11px;line-height:11px;font-weight:400;color:#3fcb6f;">+<svg class="one" viewBox="0 0 1139 1466" preserveAspectRatio="none"><path d="M783 1466L563 1466L563 339C520 380 463 421 392 463C322 504 259 536 203 557L203 363C303 316 391 259 467 192C543 125 597 61 628 0L783 0Z"/></svg></div>
<svg class="r" style="left:709px;top:437px" width="8" height="12" viewBox="0 0 8 12"><path d="M6 2.2 L1.9 6 L6 9.8" fill="none" stroke="#6e6f73" stroke-width="1.9" stroke-linecap="round" stroke-linejoin="round"/></svg>
<svg class="r" style="left:742px;top:437px" width="8" height="12" viewBox="0 0 8 12"><path d="M1.6 2.2 L5.7 6 L1.6 9.8" fill="none" stroke="#e2e3e5" stroke-width="1.9" stroke-linecap="round" stroke-linejoin="round"/></svg>
<div class="t" style="left:779.5px;top:437.09px;font-size:12.3px;line-height:12.3px;font-weight:400;color:#e6e7e9;">Compare top 5 on chart</div>
<div class="r" style="left:1013px;top:0px;width:11px;height:478px;background:#28292b;"></div>
<div class="r" style="left:0px;top:476px;width:1024px;height:2px;background:#141414;"></div>
<div class="r" style="left:94px;top:476px;width:43px;height:2px;background:#3a3a3a;"></div>

</body></html>
